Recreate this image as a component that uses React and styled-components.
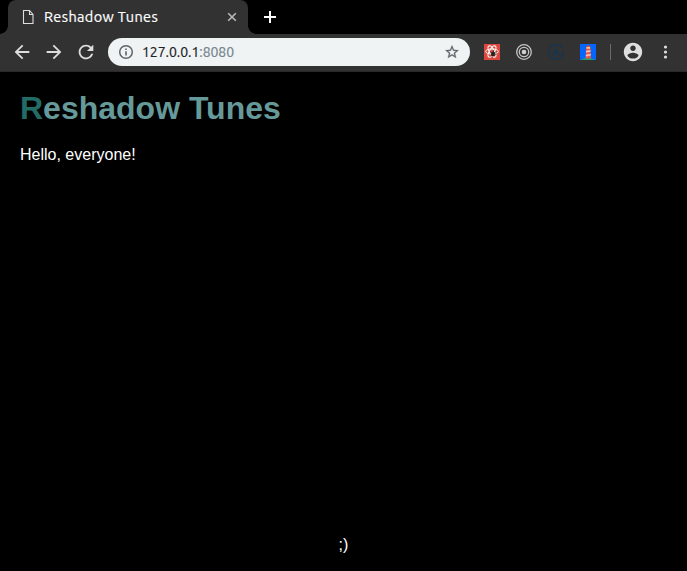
import React from "react";
import styled, { createGlobalStyle } from "styled-components";

const GlobalStyle = createGlobalStyle`
  * { box-sizing: border-box; }
  body { margin: 0; background: #000; }
`;

const Window = styled.div`
  display: flex;
  flex-direction: column;
  width: 687px;
  height: 571px;
  background: #000;
  overflow: hidden;
`;

const TabStrip = styled.header`
  display: flex;
  height: 34px;
  padding-left: 8px;
`;

const Tab = styled.div`
  position: relative;
  display: flex;
  align-items: center;
  width: 240px;
  height: 34px;
  padding: 0 11px 0 14px;
  border-radius: 8px 8px 0 0;
  background: #323232;

  &::before,
  &::after {
    content: "";
    position: absolute;
    bottom: 0;
    width: 8px;
    height: 8px;
  }
  &::before {
    left: -8px;
    background: radial-gradient(circle at 0 0, transparent 7.5px, #323232 8px);
  }
  &::after {
    right: -8px;
    background: radial-gradient(circle at 100% 0, transparent 7.5px, #323232 8px);
  }
`;

const TabTitle = styled.span`
  flex: 1;
  margin-left: 8px;
  color: #fff;
  font: 14.5px/20px Ubuntu, "Noto Sans", sans-serif;
  letter-spacing: 0.36px;
  -webkit-text-stroke: 0.2px currentColor;
  white-space: nowrap;
`;

const IconButton = styled.button`
  display: flex;
  align-items: center;
  justify-content: center;
  flex: none;
  width: ${(p) => p.$width}px;
  height: ${(p) => p.$height || 28}px;
  padding: 0;
  border: 0;
  background: none;
  color: ${(p) => p.$color || "#dedede"};
`;

const NewTab = styled(IconButton)`
  margin-left: 8px;
`;

const Toolbar = styled.nav`
  display: flex;
  align-items: center;
  flex: none;
  height: 38px;
  padding: 0 0 1px 6px;
  border-bottom: 1px solid #292929;
  background: #323232;
`;

const AddressBar = styled.div`
  display: flex;
  align-items: center;
  flex: none;
  width: 362px;
  height: 28px;
  margin-left: 6px;
  padding: 0 10px;
  border-radius: 14px;
  background: #eff3f4;
`;

const Url = styled.span`
  flex: 1;
  margin-left: 8px;
  color: #202124;
  font: 14px/20px Ubuntu, "Noto Sans", sans-serif;
  letter-spacing: -0.05px;
  -webkit-text-stroke: 0.2px currentColor;
`;

const Port = styled.span`
  color: #75828c;
`;

const Extensions = styled.div`
  display: flex;
  align-items: center;
  flex: none;
  gap: 16px;
  margin-left: 14px;
`;

const Divider = styled.span`
  flex: none;
  width: 1px;
  height: 16px;
  margin: 0 8px 0 14px;
  background: #6b6b6b;
`;

const Page = styled.main`
  display: flex;
  flex-direction: column;
  flex: 1;
  padding: 18px 20px 17px;
  color: #fff;
  font: 16px/18px "Liberation Sans", Arial, sans-serif;
`;

const Heading = styled.h1`
  margin: 0;
  color: #669999;
  font-size: 32px;
  line-height: 37px;

  &::first-letter {
    color: #236b66;
  }
`;

const Greeting = styled.p`
  margin: 19px 0 0;
`;

const Footer = styled.footer`
  margin-top: auto;
  text-align: center;
`;

const Icon = ({ size = 20, box = 24, children }) => (
  <svg width={size} height={size} viewBox={`0 0 ${box} ${box}`} fill="currentColor">
    {children}
  </svg>
);

const FileIcon = () => (
  <svg width="14" height="16" viewBox="0 0 14 16" fill="none" stroke="#dedede">
    <path d="M1.5 1.5H7.5L11 5.5V14.5H1.5Z M7.5 1.5V5.5H11" strokeWidth="1.1" />
  </svg>
);

const ReactExtension = () => (
  <Icon size={16} box={16}>
    <path fill="#dc473f" d="M0 0h16v16H0z" />
    <g fill="none" stroke="#fff" strokeWidth="1">
      <ellipse cx="8" cy="7.5" rx="6.4" ry="2.5" />
      <ellipse cx="8" cy="7.5" rx="6.4" ry="2.5" transform="rotate(60 8 7.5)" />
      <ellipse cx="8" cy="7.5" rx="6.4" ry="2.5" transform="rotate(120 8 7.5)" />
    </g>
    <ellipse cx="9" cy="10" rx="1.8" ry="2.6" transform="rotate(25 9 10)" fill="#25211f" />
    <path d="M6.2 7.5l5 4.5M12 7.5l-5 5M6.5 10h6M9.8 6.2l-1 2" stroke="#25211f" strokeWidth="0.8" />
  </Icon>
);

const TargetExtension = () => (
  <Icon size={16} box={16}>
    <g fill="none" stroke="#c5c5c5" strokeWidth="1.3">
      <circle cx="8" cy="8" r="7.3" />
      <circle cx="8" cy="8" r="4.7" />
    </g>
    <circle cx="8" cy="8" r="2.3" fill="#d0d0d0" />
  </Icon>
);

const ApolloExtension = () => (
  <Icon size={16} box={16}>
    <g fill="none" stroke="#19344f">
      <path d="M13.7 3.2A7.3 7.3 0 1 0 15.2 6.7" strokeWidth="1.5" />
      <path d="M5.1 11.5 8 4.8 10.9 11.5M6.8 9.5H10" strokeWidth="1.7" />
    </g>
    <circle cx="13.4" cy="2.8" r="1" fill="#19344f" />
  </Icon>
);

const LighthouseExtension = () => (
  <Icon size={16} box={16}>
    <path fill="#0565ff" d="M0 0h16v16H0z" />
    <path fill="#20a464" d="M1 16Q4 13.6 8 14T15 16Z" />
    <path fill="#eb5945" d="M6.3 3.5h4L11 14.5H5.6Z" />
    <path fill="#f8c0ae" d="M6 6.8l4.5-.9v1.8L6 8.6ZM5.8 10.8l5-1v1.8l-5 1Z" />
    <path fill="#ffcf70" d="M6.5 3h3.6v2H6.5z" />
    <path fill="#d94938" d="M6 3 8.3.8 10.6 3ZM5.7 4.8h5.2v1H5.7z" />
  </Icon>
);

export default function App() {
  return (
    <Window>
      <GlobalStyle />
      <TabStrip>
        <Tab>
          <FileIcon />
          <TabTitle>Reshadow Tunes</TabTitle>
          <IconButton $width={10} $color="#b9b9b9" aria-label="Close tab">
            <svg width="10" height="10" viewBox="0 0 10 10" stroke="currentColor" strokeWidth="1.6">
              <path d="M1.2 1.2l7.6 7.6M8.8 1.2L1.2 8.8" />
            </svg>
          </IconButton>
        </Tab>
        <NewTab $width={28} $height={34} $color="#fff" aria-label="New tab">
          <svg width="12" height="12" viewBox="0 0 12 12" stroke="currentColor" strokeWidth="2">
            <path d="M6 0v12M0 6h12" />
          </svg>
        </NewTab>
      </TabStrip>
      <Toolbar>
        <IconButton $width={32} aria-label="Back">
          <Icon size={22}>
            <path d="M20 11H7.83l5.59-5.59L12 4l-8 8 8 8 1.41-1.41L7.83 13H20v-2z" />
          </Icon>
        </IconButton>
        <IconButton $width={32} aria-label="Forward">
          <Icon size={22}>
            <path d="M12 4l-1.41 1.41L16.17 11H4v2h12.17l-5.58 5.59L12 20l8-8z" />
          </Icon>
        </IconButton>
        <IconButton $width={32} aria-label="Reload">
          <Icon size={22}>
            <path d="M17.65 6.35C16.2 4.9 14.21 4 12 4c-4.42 0-7.99 3.58-7.99 8s3.57 8 7.99 8c3.73 0 6.84-2.55 7.73-6h-2.08c-.82 2.33-3.04 4-5.65 4-3.31 0-6-2.69-6-6s2.69-6 6-6c1.66 0 3.14.69 4.22 1.78L13 11h7V4l-2.35 2.35z" />
          </Icon>
        </IconButton>
        <AddressBar>
          <IconButton $width={16} $color="#5f6368" aria-label="Site information">
            <Icon size={16} box={16}>
              <circle cx="8" cy="8" r="6.3" fill="none" stroke="currentColor" strokeWidth="1.5" />
              <path d="M7.2 7.2h1.6v4.2H7.2zM7.2 4.5h1.6v1.6H7.2z" />
            </Icon>
          </IconButton>
          <Url>
            127.0.0.1<Port>:8080</Port>
          </Url>
          <IconButton $width={16} $color="#5f6368" aria-label="Bookmark">
            <Icon size={18}>
              <path
                stroke="currentColor"
                strokeWidth="0.4"
                d="M22 9.24l-7.19-.62L12 2 9.19 8.63 2 9.24l5.46 4.73L5.82 21 12 17.27 18.18 21l-1.63-7.03L22 9.24zM12 15.4l-3.76 2.27 1-4.28-3.32-2.88 4.38-.38L12 6.1l1.71 4.04 4.38.38-3.32 2.88 1 4.28L12 15.4z"
              />
            </Icon>
          </IconButton>
        </AddressBar>
        <Extensions>
          <ReactExtension />
          <TargetExtension />
          <ApolloExtension />
          <LighthouseExtension />
        </Extensions>
        <Divider />
        <IconButton $width={28} aria-label="Profile">
          <Icon size={22}>
            <path d="M12 2C6.48 2 2 6.48 2 12s4.48 10 10 10 10-4.48 10-10S17.52 2 12 2zm0 3c1.66 0 3 1.34 3 3s-1.34 3-3 3-3-1.34-3-3 1.34-3 3-3zm0 14.2c-2.5 0-4.71-1.28-6-3.22.03-1.99 4-3.08 6-3.08 1.99 0 5.97 1.09 6 3.08-1.29 1.94-3.5 3.22-6 3.22z" />
          </Icon>
        </IconButton>
        <IconButton $width={36} aria-label="Menu">
          <Icon size={16} box={16}>
            <circle cx="8.5" cy="3" r="1.6" />
            <circle cx="8.5" cy="8" r="1.6" />
            <circle cx="8.5" cy="13" r="1.6" />
          </Icon>
        </IconButton>
      </Toolbar>
      <Page>
        <Heading>Reshadow Tunes</Heading>
        <Greeting>Hello, everyone!</Greeting>
        <Footer>;)</Footer>
      </Page>
    </Window>
  );
}
